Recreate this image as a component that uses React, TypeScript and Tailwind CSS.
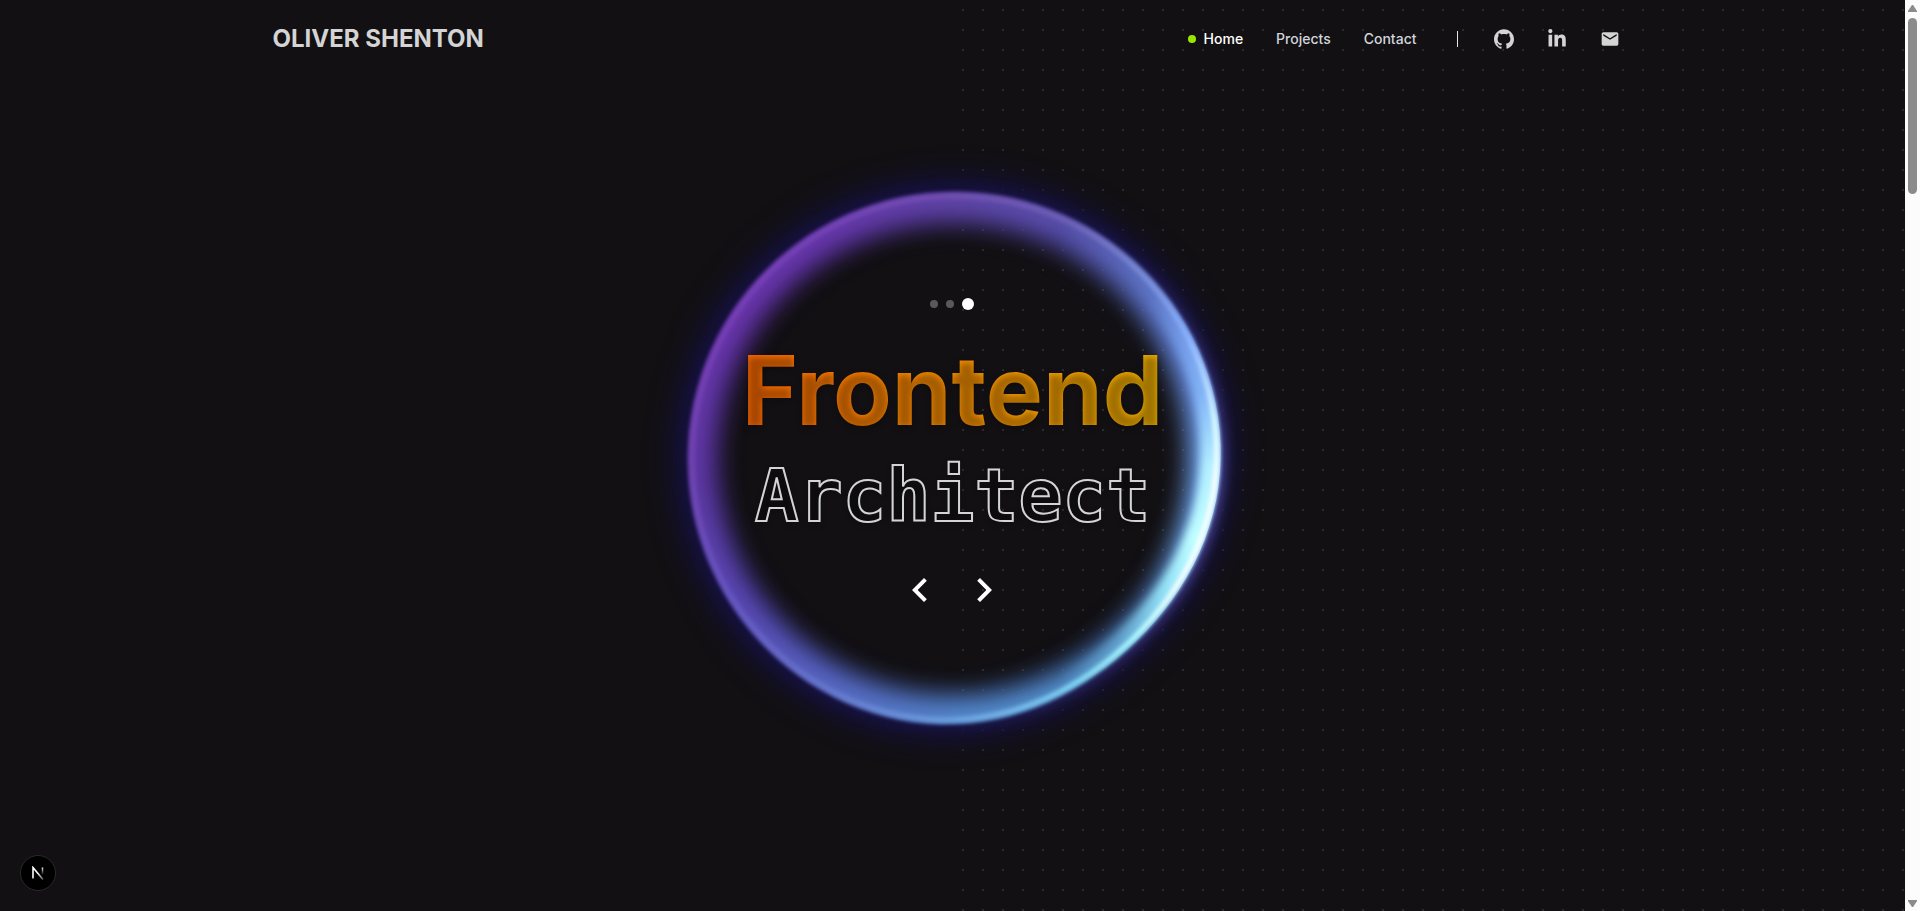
import type { ReactNode } from "react";
import { FaLinkedinIn } from "react-icons/fa";
import { MdChevronLeft, MdChevronRight, MdEmail } from "react-icons/md";
import { SiGithub } from "react-icons/si";

const CENTER = { x: 353, y: 353 };

// Closed outline of the orb: a circle with a shallow dent on the lower right.
function orbOutline(offset = 0): string {
  const points: string[] = [];
  for (let deg = 0; deg < 360; deg += 3) {
    const dent = 10 * Math.exp(-(((deg - 138) / 24) ** 2) / 2);
    const r = 267 - dent + offset;
    const a = (deg * Math.PI) / 180;
    points.push(`${(CENTER.x + r * Math.sin(a)).toFixed(1)} ${(CENTER.y - r * Math.cos(a)).toFixed(1)}`);
  }
  return `M${points.join("L")}Z`;
}

function Orb() {
  const outline = orbOutline();
  return (
    <svg
      aria-hidden="true"
      viewBox="0 0 700 700"
      className="pointer-events-none absolute top-1/2 left-1/2 size-[700px] -translate-x-1/2 -translate-y-1/2"
      colorInterpolationFilters="sRGB"
    >
      <defs>
        <filter id="blur-edge" x="-10%" y="-10%" width="120%" height="120%">
          <feGaussianBlur stdDeviation="2" />
        </filter>
        <filter id="blur-flare" x="-10%" y="-10%" width="120%" height="120%">
          <feGaussianBlur stdDeviation="4" />
        </filter>
        <filter id="blur-halo" x="-20%" y="-20%" width="140%" height="140%">
          <feGaussianBlur stdDeviation="14" />
        </filter>
        <filter id="blur-fringe" x="-20%" y="-20%" width="140%" height="140%">
          <feGaussianBlur stdDeviation="6" />
        </filter>
        <filter id="blur-hole" x="-20%" y="-20%" width="140%" height="140%">
          <feGaussianBlur stdDeviation="13" />
        </filter>
        <mask id="band" maskUnits="userSpaceOnUse" x="0" y="0" width="700" height="700">
          <path d={outline} fill="white" filter="url(#blur-edge)" />
          <circle cx="351" cy="353" r="237" fill="black" filter="url(#blur-hole)" />
        </mask>
        <mask id="rim" maskUnits="userSpaceOnUse" x="0" y="0" width="700" height="700">
          <path d={orbOutline(-4)} fill="none" stroke="white" strokeWidth="5" filter="url(#blur-edge)" />
        </mask>
        <mask id="flare" maskUnits="userSpaceOnUse" x="0" y="0" width="700" height="700">
          <g clipPath="url(#orb-shape)">
            <path d={orbOutline(-9)} fill="none" stroke="white" strokeWidth="22" filter="url(#blur-flare)" />
          </g>
        </mask>
        <clipPath id="orb-shape">
          <path d={outline} />
        </clipPath>
        <mask id="fringe" maskUnits="userSpaceOnUse" x="0" y="0" width="700" height="700">
          <path d={orbOutline(-2)} fill="none" stroke="white" strokeWidth="14" filter="url(#blur-fringe)" />
        </mask>
      </defs>
      <path d={orbOutline(-4)} fill="none" stroke="#141040" strokeWidth="36" filter="url(#blur-halo)" />
      <foreignObject x="0" y="0" width="700" height="700" mask="url(#fringe)">
        <div className="size-full bg-[conic-gradient(from_0deg_at_353px_353px,#16123e,#1a164a_40deg,#343070_75deg,#484490_95deg,#484490_115deg,#302c66_140deg,#181446_180deg,#15113c_270deg,#16123e_360deg)]" />
      </foreignObject>
      <foreignObject x="0" y="0" width="700" height="700" mask="url(#band)">
        <div className="size-full bg-[conic-gradient(from_0deg_at_353px_353px,#6045a8,#5850ac_25deg,#5c70c2_45deg,#6a90e4_65deg,#78b0fc_90deg,#78bcfc_110deg,#5c9cd4_130deg,#5494cc_150deg,#5488cc_180deg,#5868c4_210deg,#5a4ab6_235deg,#6039a6_265deg,#6a35ac_300deg,#6837ac_330deg,#6045a8_360deg)]" />
      </foreignObject>
      <foreignObject x="0" y="0" width="700" height="700" mask="url(#flare)">
        <div className="size-full bg-[conic-gradient(from_0deg_at_353px_353px,#8cb8ff00_50deg,#8cc0ffb0_75deg,#b4f0ff_92deg,#c0ffff_108deg,#a0f4ffd0_122deg,#84dcf860_138deg,#80d4f800_155deg)]" />
      </foreignObject>
      <foreignObject x="0" y="0" width="700" height="700" mask="url(#rim)">
        <div className="size-full bg-[conic-gradient(from_0deg_at_353px_353px,#7450b0,#7062b6_25deg,#7c8cd6_45deg,#8cb4ff_62deg,#e0ffff_82deg,#ffffff_95deg,#ffffff_120deg,#b4ffff_135deg,#84dcf8_152deg,#70a4e2_180deg,#6678cc_210deg,#6856c0_240deg,#7244b0_270deg,#7840b6_300deg,#7546b6_335deg,#7450b0_360deg)]" />
      </foreignObject>
    </svg>
  );
}

function SocialLink({ href, label, children }: { href: string; label: string; children: ReactNode }) {
  return (
    <a href={href} aria-label={label} className="flex h-10 w-[45px] items-center justify-center text-[#d4d4d4]">
      {children}
    </a>
  );
}

function Header() {
  return (
    <header className="mx-auto flex h-[78px] w-full max-w-[1360px] items-center justify-between">
      <a href="#home" className="text-2xl leading-8 font-bold text-[#d4d4d4]">
        OLIVER SHENTON
      </a>
      <div className="flex items-center">
        <nav className="flex items-center gap-[33px] text-sm font-medium text-[#d1d5dc]">
          <a href="#home" aria-current="page" className="flex items-center gap-2 text-white">
            <span className="size-2 rounded-full bg-[#9ae600]" />
            Home
          </a>
          <a href="#projects">Projects</a>
          <a href="#contact">Contact</a>
        </nav>
        <span className="mr-6 ml-10 h-4 w-px bg-[#e5e5e5]" />
        <div className="flex items-center gap-2">
          <SocialLink href="#github" label="GitHub">
            <SiGithub size={20} />
          </SocialLink>
          <SocialLink href="#linkedin" label="LinkedIn">
            <FaLinkedinIn size={20} />
          </SocialLink>
          <SocialLink href="#email" label="Email">
            <MdEmail size={20} />
          </SocialLink>
        </div>
      </div>
    </header>
  );
}

function Hero() {
  return (
    <section className="flex flex-1 items-center justify-center pb-[78px]">
      <div className="relative flex flex-col items-center">
        <Orb />
        <div className="relative flex items-center gap-2">
          <button aria-label="Slide 1" className="size-2 rounded-full bg-white/30" />
          <button aria-label="Slide 2" className="size-2 rounded-full bg-white/30" />
          <button aria-label="Slide 3" aria-current="true" className="size-3 rounded-full bg-white" />
        </div>
        <h1 className="relative flex flex-col items-center pt-8">
          <span className="bg-linear-to-r from-[#ff6900] to-[#f0b100] bg-clip-text text-8xl leading-none font-bold text-transparent [text-shadow:0_2px_6px_rgb(0_0_0/0.34)]">
            Frontend
          </span>
          <span className="mt-[18px] font-['DejaVu_Sans_Mono',monospace] text-[73px] leading-[80px] font-bold text-transparent [-webkit-text-stroke:2px_#d4d4d4] [text-shadow:0_2px_6px_rgb(0_0_0/0.34)]">
            Architect
          </span>
        </h1>
        <div className="relative flex gap-4 pt-[30px] text-white">
          <button aria-label="Previous">
            <MdChevronLeft size={48} />
          </button>
          <button aria-label="Next">
            <MdChevronRight size={48} />
          </button>
        </div>
      </div>
    </section>
  );
}

function NextBadge() {
  return (
    <button
      aria-label="Open dev tools"
      className="absolute bottom-5 left-5 flex size-9 items-center justify-center rounded-full border border-[#2a2a2a] bg-black"
    >
      <svg width="14" height="14" viewBox="0 0 14 14" fill="none" aria-hidden="true">
        <defs>
          <linearGradient id="next-stem" x1="11" y1="1" x2="11" y2="9" gradientUnits="userSpaceOnUse">
            <stop stopColor="white" />
            <stop offset="1" stopColor="white" stopOpacity="0" />
          </linearGradient>
          <linearGradient id="next-tail" x1="7" y1="7" x2="12" y2="14" gradientUnits="userSpaceOnUse">
            <stop stopColor="white" />
            <stop offset="1" stopColor="white" stopOpacity="0.3" />
          </linearGradient>
        </defs>
        <path d="M2 12.5V1.5L12 13.5" stroke="url(#next-tail)" strokeWidth="1.6" />
        <path d="M11.5 1.5V9.5" stroke="url(#next-stem)" strokeWidth="1.5" />
      </svg>
    </button>
  );
}

function ScrollBar() {
  return (
    <div aria-hidden="true" className="flex w-[15px] shrink-0 flex-col items-center bg-[#fcfcfc] pt-[5px] pb-1">
      <svg width="9" height="7" viewBox="0 0 9 7" fill="#8b8b8b">
        <path d="M3.6.6a1.1 1.1 0 0 1 1.8 0L9 6v1H0V6z" />
      </svg>
      <div className="mt-1.5 flex w-[9px] flex-1 flex-col">
        <div className="h-[20%] rounded-full bg-[#8b8b8b]" />
      </div>
      <svg width="9" height="7" viewBox="0 0 9 7" fill="#8b8b8b">
        <path d="M5.4 6.4a1.1 1.1 0 0 1-1.8 0L0 1V0h9v1z" />
      </svg>
    </div>
  );
}

export default function App() {
  return (
    <div className="flex h-screen overflow-hidden bg-[#121013] font-['Inter',sans-serif]">
      <main className="relative flex min-w-0 flex-1 flex-col">
        <div className="pointer-events-none absolute inset-y-0 right-0 left-1/2 bg-[radial-gradient(circle,#2d2b2f_1px,transparent_1px)] bg-size-[20px_20px]" />
        <div className="relative flex flex-1 flex-col">
          <Header />
          <Hero />
        </div>
        <NextBadge />
      </main>
      <ScrollBar />
    </div>
  );
}
